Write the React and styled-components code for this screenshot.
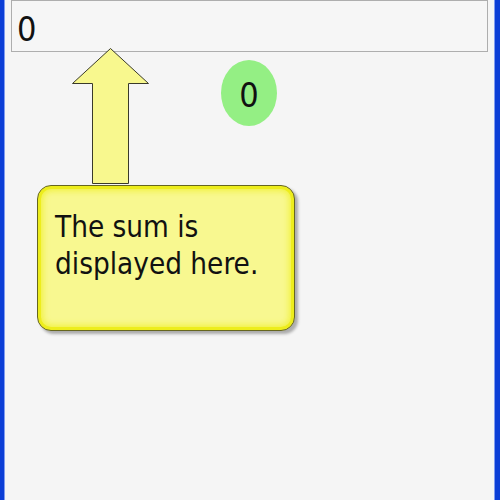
import React from "react";
import styled, { createGlobalStyle } from "styled-components";

const Global = createGlobalStyle`
  html, body { margin: 0; padding: 0; background: #f5f5f5; }
  #root { width: 500px; height: 500px; }
`;

const Frame = styled.div`
  box-sizing: border-box;
  width: 500px;
  height: 500px;
  background: #f5f5f5;
  border-left: 4px solid #0b3ed6;
  border-right: 5px solid #0b3ed6;
  box-shadow: inset 1px 0 0 #7f9cf0, inset -1px 0 0 #7f9cf0;
  display: flex;
  flex-direction: column;
  font-family: "DejaVu Sans Condensed", "DejaVu Sans", sans-serif;
  font-stretch: condensed;
  color: #111;
  overflow: hidden;
`;

const Display = styled.div`
  box-sizing: border-box;
  margin-left: 7px;
  width: 477px;
  height: 52px;
  border: 1px solid #aeaeae;
  background: #f6f6f6;
  padding: 6px 0 0 5px;
  font-size: 34px;
  line-height: 44px;
`;

const Row = styled.div`
  display: flex;
  align-items: flex-start;
  margin-top: -5px;
`;

const ArrowSvg = styled.svg`
  display: block;
  margin-left: 68px;
  flex: none;
`;

const Bubble = styled.div`
  margin-left: 71px;
  margin-top: 13px;
  width: 56px;
  height: 66px;
  border-radius: 50%;
  background: #94ef84;
  display: flex;
  align-items: center;
  justify-content: center;
  font-size: 34px;
  padding-top: 3px;
  box-sizing: border-box;
`;

const Callout = styled.div`
  box-sizing: border-box;
  margin-left: 33px;
  width: 258px;
  height: 146px;
  border: 1px solid #66661f;
  border-radius: 14px;
  background: #f8f890;
  box-shadow:
    inset 0 0 0 3px #eded1c,
    inset 0 0 6px 5px #f1f140,
    3px 3px 3px rgba(0, 0, 0, 0.3);
  padding: 23px 0 0 17px;
  font-size: 29.4px;
  line-height: 37px;
`;

function Arrow() {
  return (
    <ArrowSvg width="78" height="138" viewBox="0 0 78 138">
      <path
        d="M38.5 1.5 L76.5 36.5 L56.5 36.5 L56.5 136.5 L20.5 136.5 L20.5 36.5 L0.5 36.5 Z"
        fill="#f8f88e"
        stroke="#3a3a2a"
        strokeWidth="1"
        strokeLinejoin="miter"
      />
    </ArrowSvg>
  );
}

export default function App() {
  return (
    <>
      <Global />
      <Frame>
        <Display>0</Display>
        <Row>
          <Arrow />
          <Bubble>0</Bubble>
        </Row>
        <Callout>
          The sum is
          <br />
          displayed here.
        </Callout>
      </Frame>
    </>
  );
}
